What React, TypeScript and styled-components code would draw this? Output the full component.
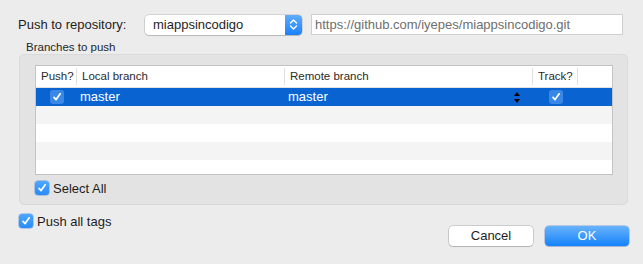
import React from "react";
import styled, { createGlobalStyle } from "styled-components";

const Global = createGlobalStyle`
  html, body { margin: 0; padding: 0; }
  body {
    background: #ececec;
    font-family: "Liberation Sans", Arial, sans-serif;
    color: #1e1e1e;
    -webkit-font-smoothing: antialiased;
  }
`;

const Window = styled.div`
  width: 643px;
  height: 264px;
  background: #ececec;
  box-sizing: border-box;
  overflow: hidden;
  display: flex;
  flex-direction: column;
`;

const TopRow = styled.div`
  display: flex;
  align-items: center;
  margin: 14px 0 0 18px;
  height: 21px;
`;

const Label = styled.span<{ $width?: number }>`
  font-size: 13px;
  width: ${(p) => (p.$width ? `${p.$width}px` : "auto")};
  flex: none;
  white-space: nowrap;
`;

const Popup = styled.div`
  width: 157px;
  height: 20px;
  box-sizing: border-box;
  display: flex;
  background: #fff;
  border-radius: 4px;
  box-shadow: 0 0 0 0.5px rgba(0, 0, 0, 0.22), 0 1px 1px rgba(0, 0, 0, 0.12);
  overflow: hidden;
`;

const PopupText = styled.span`
  flex: 1;
  font-size: 13px;
  line-height: 20px;
  padding-left: 8px;
`;

const PopupArrows = styled.span`
  width: 17px;
  height: 20px;
  background: linear-gradient(#5fadfb, #1a80fa);
  display: flex;
  align-items: center;
  justify-content: center;
`;

const UrlField = styled.div`
  margin-left: 9px;
  width: 312px;
  height: 21px;
  box-sizing: border-box;
  background: #fff;
  border: 1px solid #cfcfcf;
  font-size: 13px;
  line-height: 19px;
  padding-left: 3px;
  color: #6e6e6e;
  white-space: nowrap;
`;

const GroupLabel = styled.div`
  margin: 6px 0 0 26px;
  font-size: 11.5px;
  line-height: 13px;
  color: #262626;
`;

const Group = styled.div`
  margin-left: 19px;
  width: 609px;
  height: 151px;
  box-sizing: border-box;
  background: #e3e3e3;
  border: 1px solid #dadada;
  border-radius: 5px;
  padding: 10px 0 0 15px;
`;

const Table = styled.div`
  width: 578px;
  height: 110px;
  box-sizing: border-box;
  border: 1px solid #c3c3c3;
  background: #fff;
  overflow: hidden;
`;

const cols = "41px 208px 248px 45px 1fr";

const HeaderRow = styled.div`
  display: grid;
  grid-template-columns: ${cols};
  height: 21px;
  border-bottom: 1px solid #e2e2e2;
  align-items: center;
  background: #fff;
`;

const HeaderCell = styled.div<{ $last?: boolean }>`
  height: 17px;
  font-size: 11.5px;
  line-height: 17px;
  color: #2a2a2a;
  padding-left: 5px;
  border-right: ${(p) => (p.$last ? "none" : "1px solid #e0e0e0")};
  white-space: nowrap;
`;

const Row = styled.div<{ $selected?: boolean; $alt?: boolean }>`
  display: grid;
  grid-template-columns: ${cols};
  height: 18px;
  align-items: center;
  background: ${(p) => (p.$selected ? "#0964d2" : p.$alt ? "#f4f4f4" : "#fff")};
  color: ${(p) => (p.$selected ? "#fff" : "#1e1e1e")};
`;

const CenterCell = styled.div`
  display: flex;
  justify-content: center;
  align-items: center;
`;

const TextCell = styled.div<{ $pad: number }>`
  font-size: 13px;
  line-height: 18px;
  padding-left: ${(p) => p.$pad}px;
  display: flex;
  align-items: center;
  justify-content: space-between;
  padding-right: 13px;
`;

const Box = styled.span<{ $onSelection?: boolean }>`
  width: 14px;
  height: 14px;
  box-sizing: border-box;
  border-radius: 3px;
  display: inline-flex;
  align-items: center;
  justify-content: center;
  flex: none;
  background: ${(p) =>
    p.$onSelection ? "rgba(120,180,255,0.45)" : "linear-gradient(#4ea6fd, #2a8cf9)"};
  box-shadow: ${(p) => (p.$onSelection ? "none" : "0 0 0 0.5px rgba(0,90,200,0.5)")};
`;

const CheckRow = styled.div<{ $mt: number; $ml: number }>`
  display: flex;
  align-items: center;
  gap: 4px;
  margin: ${(p) => `${p.$mt}px 0 0 ${p.$ml}px`};
  height: 14px;
  font-size: 13px;
`;

const Footer = styled.div`
  display: flex;
  justify-content: space-between;
  align-items: flex-start;
  margin-top: 9px;
  padding-right: 14px;
`;

const Buttons = styled.div`
  display: flex;
  gap: 12px;
  margin-top: 12px;
`;

const Button = styled.div<{ $primary?: boolean }>`
  width: 84px;
  height: 20px;
  box-sizing: border-box;
  border-radius: 4px;
  font-size: 13px;
  line-height: 20px;
  text-align: center;
  color: ${(p) => (p.$primary ? "#fff" : "#1e1e1e")};
  background: ${(p) => (p.$primary ? "linear-gradient(#69b2fb, #1482fa)" : "#fff")};
  box-shadow: ${(p) =>
    p.$primary
      ? "0 0 0 0.5px rgba(0,80,200,0.45), 0 1px 1px rgba(0,0,0,0.1)"
      : "0 0 0 0.5px rgba(0,0,0,0.28), 0 1px 1px rgba(0,0,0,0.12)"};
`;

const Check = () => (
  <svg width="10" height="10" viewBox="0 0 10 10">
    <path d="M2 5.4 L4.1 7.6 L8.2 1.8" fill="none" stroke="#fff" strokeWidth="1.7" strokeLinecap="round" strokeLinejoin="round" />
  </svg>
);

const Chevrons = () => (
  <svg width="9" height="13" viewBox="0 0 9 13">
    <path d="M1.5 5 L4.5 2 L7.5 5 M1.5 8 L4.5 11 L7.5 8" fill="none" stroke="#fff" strokeWidth="1.4" strokeLinecap="round" strokeLinejoin="round" />
  </svg>
);

const Stepper = () => (
  <svg width="6" height="13" viewBox="0 0 6 13">
    <path d="M3 1 L6 5 L0 5 Z M0 8 L6 8 L3 12 Z" fill="#000" />
  </svg>
);

export default function App() {
  return (
    <>
      <Global />
      <Window>
        <TopRow>
          <Label $width={127}>Push to repository:</Label>
          <Popup>
            <PopupText>miappsincodigo</PopupText>
            <PopupArrows>
              <Chevrons />
            </PopupArrows>
          </Popup>
          <UrlField>https://github.com/iyepes/miappsincodigo.git</UrlField>
        </TopRow>
        <GroupLabel>Branches to push</GroupLabel>
        <Group>
          <Table>
            <HeaderRow>
              <HeaderCell>Push?</HeaderCell>
              <HeaderCell>Local branch</HeaderCell>
              <HeaderCell>Remote branch</HeaderCell>
              <HeaderCell>Track?</HeaderCell>
              <HeaderCell $last />
            </HeaderRow>
            <Row $selected>
              <CenterCell>
                <Box $onSelection>
                  <Check />
                </Box>
              </CenterCell>
              <TextCell $pad={3}>master</TextCell>
              <TextCell $pad={3}>
                master
                <Stepper />
              </TextCell>
              <CenterCell>
                <Box $onSelection>
                  <Check />
                </Box>
              </CenterCell>
              <div />
            </Row>
            {[true, false, true, false].map((alt, i) => (
              <Row key={i} $alt={alt} />
            ))}
          </Table>
          <CheckRow $mt={6} $ml={0}>
            <Box>
              <Check />
            </Box>
            Select All
          </CheckRow>
        </Group>
        <Footer>
          <CheckRow $mt={0} $ml={19}>
            <Box>
              <Check />
            </Box>
            Push all tags
          </CheckRow>
          <Buttons>
            <Button>Cancel</Button>
            <Button $primary>OK</Button>
          </Buttons>
        </Footer>
      </Window>
    </>
  );
}
